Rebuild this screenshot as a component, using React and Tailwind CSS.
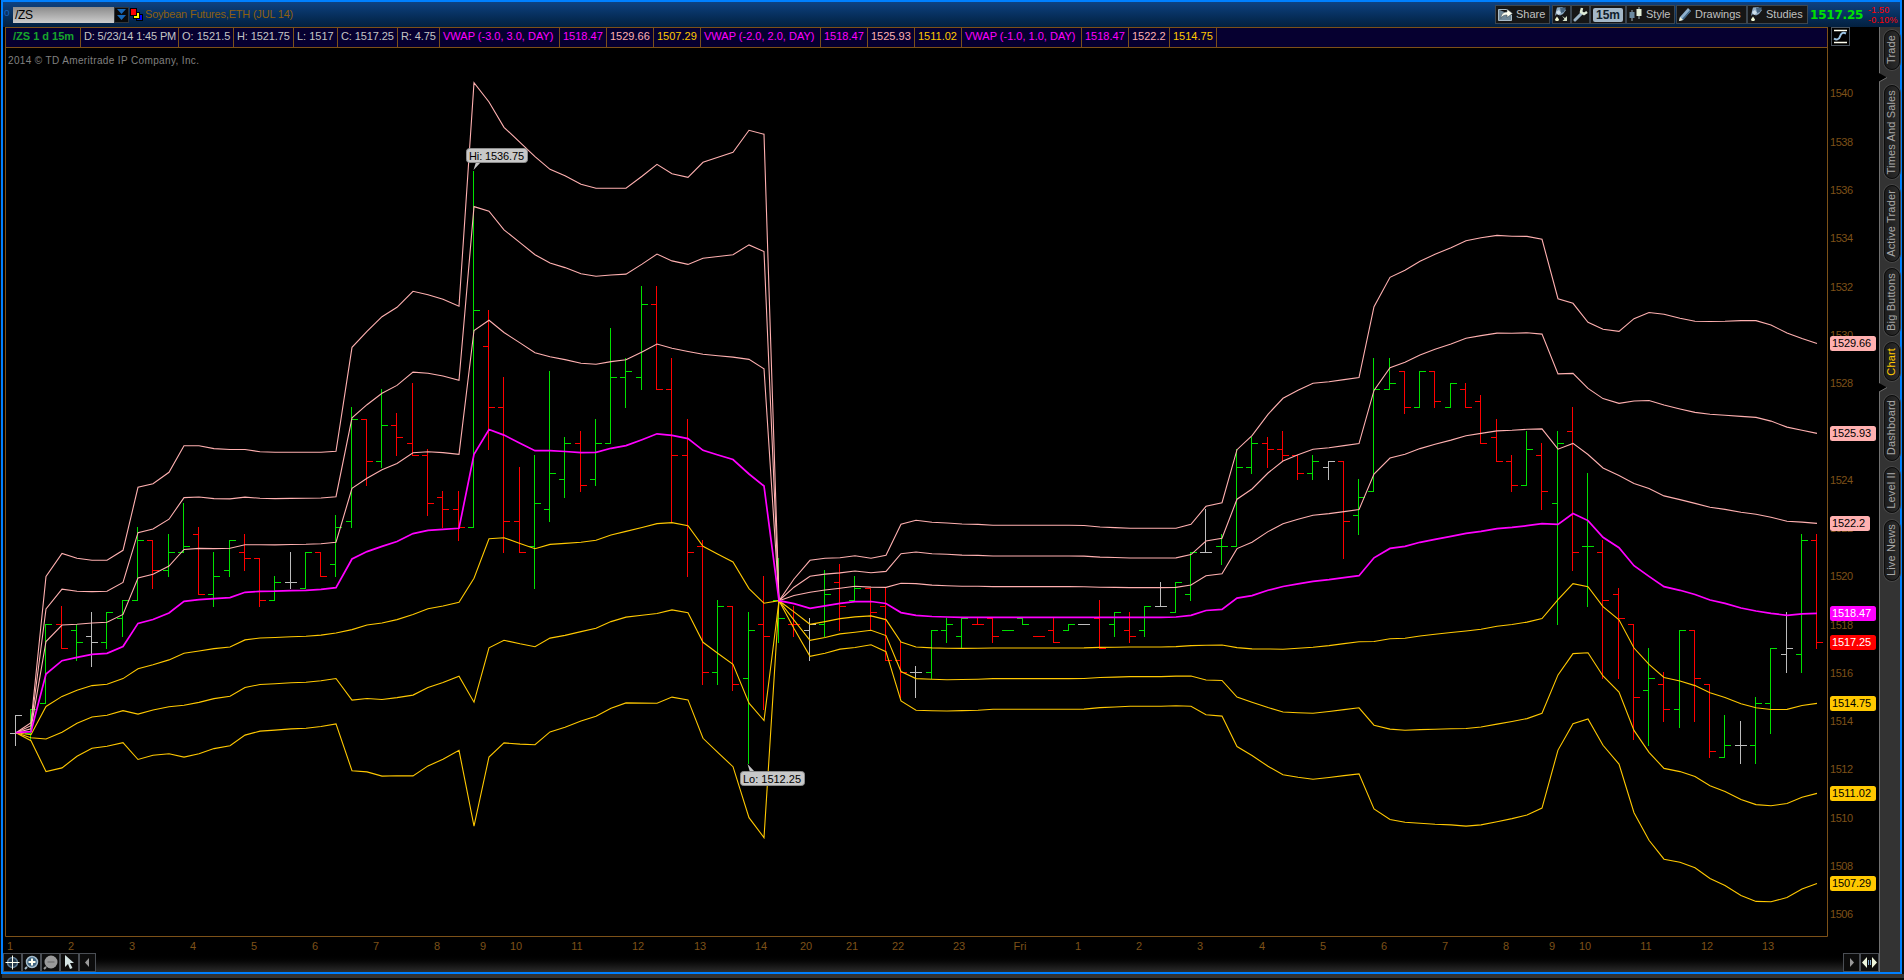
const PINK = '#ffb0b0';
const GOLD = '#ffc800';
const MAGENTA = '#ff00ff';

// Session high, every bar value below is counted in quarter-point ticks under it
const SESSION_HIGH = 1536.75;

// [color, high, low, open, close]
const BARS = [
    ['w', 90, 95, 93, 90], ['g', 89, 94, 93, 89], ['g', 75, 88, 88, 75], ['r', 72, 79, 75, 79],
    ['g', 75, 81, 76, 78], ['w', 73, 82, 77, 78], ['g', 73, 79, 78, 73], ['g', 71, 77, 74, 71],
    ['g', 59, 71, 71, 61], ['r', 61, 69, 61, 66], ['g', 60, 67, 66, 63], ['g', 55, 63, 63, 62],
    ['r', 59, 70, 60, 70], ['g', 63, 72, 70, 67], ['g', 61, 67, 66, 61], ['r', 60, 66, 63, 64],
    ['r', 64, 72, 64, 71], ['g', 67, 71, 71, 68], ['w', 63, 69, 68, 68], ['g', 63, 69, 69, 63],
    ['r', 63, 67, 63, 67], ['g', 57, 67, 65, 59], ['g', 39, 59, 58, 41], ['r', 41, 52, 41, 48],
    ['g', 36, 49, 48, 42], ['r', 40, 47, 42, 44], ['r', 35, 47, 45, 47], ['r', 46, 57, 47, 55],
    ['r', 53, 59, 54, 56], ['r', 53, 61, 56, 59], ['g', 0, 59, 59, 23], ['r', 23, 46, 29, 39],
    ['r', 34, 63, 39, 58], ['r', 49, 63, 58, 63], ['g', 47, 69, 62, 55], ['g', 33, 58, 56, 50],
    ['g', 44, 54, 51, 45], ['r', 43, 53, 45, 52], ['g', 41, 52, 51, 45], ['g', 26, 45, 45, 34],
    ['g', 31, 39, 34, 33], ['g', 19, 36, 34, 22], ['r', 19, 36, 22, 36], ['r', 31, 58, 36, 47],
    ['r', 41, 67, 47, 63], ['r', 61, 85, 62, 83], ['g', 71, 85, 83, 72], ['r', 72, 86, 72, 85],
    ['g', 73, 98, 84, 76], ['r', 67, 89, 75, 77], ['g', 64, 78, 71, 74], ['r', 72, 77, 75, 75],
    ['w', 74, 81, 76, 75], ['g', 66, 77, 75, 70], ['r', 65, 76, 68, 72], ['g', 67, 71, 71, 69],
    ['r', 69, 76, 69, 73], ['r', 69, 81, 72, 81], ['r', 78, 87, 81, 83], ['w', 82, 87, 83, 83],
    ['g', 76, 84, 83, 76], ['g', 74, 78, 76, 75], ['g', 74, 79, 77, 74], ['r', 74, 75, 75, 75],
    ['r', 74, 78, 74, 77], ['g', 76, 76, 76, 76], ['g', 74, 75, 74, 75], ['r', 77, 77, 77, 77],
    ['r', 74, 78, 76, 78], ['g', 75, 76, 76, 75], ['w', 75, 75, 75, 75], ['r', 71, 79, 74, 79],
    ['g', 73, 77, 75, 73], ['r', 73, 78, 76, 77], ['g', 72, 77, 76, 72], ['w', 68, 72, 72, 72],
    ['g', 68, 73, 73, 68], ['g', 63, 71, 70, 63], ['w', 56, 63, 63, 63], ['g', 60, 65, 62, 62],
    ['g', 46, 62, 62, 49], ['g', 44, 50, 49, 45], ['r', 44, 49, 45, 46], ['r', 43, 48, 46, 47],
    ['r', 47, 51, 47, 50], ['g', 47, 51, 50, 48], ['w', 48, 51, 49, 48], ['r', 48, 64, 48, 58],
    ['g', 51, 60, 57, 54], ['g', 31, 53, 53, 36], ['g', 31, 36, 36, 35], ['r', 33, 40, 33, 39],
    ['g', 33, 39, 39, 33], ['r', 33, 39, 33, 38], ['g', 35, 39, 39, 35], ['r', 35, 39, 36, 39],
    ['r', 37, 45, 38, 45], ['r', 41, 48, 44, 48], ['r', 47, 53, 48, 52], ['g', 43, 52, 52, 46],
    ['r', 45, 56, 47, 53], ['g', 43, 75, 55, 45], ['r', 39, 66, 43, 63], ['g', 50, 72, 62, 62],
    ['r', 61, 84, 63, 71], ['r', 69, 84, 70, 74], ['r', 75, 94, 75, 87], ['g', 79, 95, 86, 84],
    ['r', 83, 91, 85, 89], ['g', 76, 92, 89, 76], ['r', 76, 91, 76, 84], ['r', 85, 97, 85, 96],
    ['g', 90, 97, 97, 95], ['w', 91, 98, 95, 95], ['g', 87, 98, 95, 88], ['g', 79, 93, 88, 79],
    ['w', 73, 83, 80, 79], ['g', 60, 83, 80, 61], ['r', 60, 79, 61, 78],
];

// [vwap, upper 3-deviation band] for every bar, in chart pixels
const VWAP = [
    [732.7, 732.7], [731.7, 722.7], [674, 576.5], [660.7, 553.5], [657.3, 558.3], [654.3, 560.3],
    [653.3, 560.3], [646.5, 550.3], [623.4, 487.3], [619.5, 483.7], [613, 472.3], [601.4, 445.7],
    [599.7, 445.7], [598.6, 448.6], [597.6, 449.5], [592.3, 449.5], [591.4, 451.7], [591.2, 452.3],
    [590.6, 452.3], [590.3, 452.3], [589.4, 452.3], [587.6, 451.3], [559, 347.3], [551.6, 331.3],
    [546.4, 316.7], [541.5, 307.3], [533.6, 291.3], [530.3, 294.7], [529.3, 299.3], [528.3, 306.3],
    [454.4, 82.7], [429.5, 102], [435.1, 127.3], [443.2, 142.3], [450.7, 156.7], [450.6, 169.3],
    [451.5, 175.7], [452.7, 184.3], [452.3, 188.3], [448.3, 188.3], [445.6, 188.3], [439.7, 176.3],
    [433.8, 164.3], [435.4, 173.7], [438.6, 177.3], [450.3, 162.3], [455, 157.3], [459.5, 152.3],
    [474, 130.3], [486, 134.3], [600.7, 600.7], [603.7, 579], [608.3, 560.3], [605.8, 558.3],
    [603.4, 557.7], [601.6, 555.7], [601.5, 558.3], [603.5, 555.3], [612.6, 524.3], [615.3, 520.3],
    [616.5, 522.3], [617, 523], [617.3, 524], [617.3, 524.4], [617.3, 525.3], [617.3, 525.3],
    [617.3, 525.3], [617.3, 525.3], [617.3, 525.3], [617.3, 525.3], [617.3, 525.5], [617.3, 527],
    [617.3, 527.6], [617.3, 528.3], [617.3, 528.3], [617.3, 528.3], [617, 528.3], [615.3, 524.3],
    [610.5, 506.3], [609.4, 502.7], [598.1, 449.7], [595.6, 435.7], [590.3, 414.3], [586.5, 398.3],
    [583.8, 390.3], [581.3, 383.3], [579.6, 381.7], [577.6, 379.6], [575.7, 377.5], [557.8, 306.7],
    [548.4, 277.3], [546.3, 270.3], [542.3, 261.3], [539.3, 254.3], [536.3, 247.7], [533.4, 240.7],
    [531.3, 237.7], [528.6, 235.4], [527.4, 236.2], [525.7, 236.4], [523.7, 239.3], [524.4, 298.7],
    [513.5, 303.3], [520.6, 322.3], [537.3, 329.3], [547.7, 331.3], [565.7, 318.7], [576.4, 312.5],
    [586.7, 314.2], [590.3, 318.3], [594.5, 321.3], [600, 321.5], [603.4, 321.3], [608, 320.6],
    [611, 320.6], [613.4, 325], [615.3, 333], [613.8, 338.6], [613.4, 343.4],
];

const BAND_LINES = [
    { dev: 1, color: GOLD }, { dev: 2, color: GOLD }, { dev: 3, color: GOLD },
    { dev: -3, color: PINK }, { dev: -2, color: PINK }, { dev: -1, color: PINK },
];

const BAR_COLORS = { g: '#00e000', r: '#ff0000', w: '#bcbcbc' };

const INFO_CELLS = [
    { text: '/ZS 1 d 15m', className: 'w-[75px] pl-[7px] font-bold text-[#17a52c]' },
    { text: 'D: 5/23/14 1:45 PM', className: 'w-[98px] pl-[3px] tracking-[-0.15px] text-[#c4c4c4]' },
    { text: 'O: 1521.5', className: 'w-[55px] pl-[3px] text-[#c4c4c4]' },
    { text: 'H: 1521.75', className: 'w-[60px] pl-[3px] tracking-[-0.1px] text-[#c4c4c4]' },
    { text: 'L: 1517', className: 'w-[44px] pl-[3px] text-[#c4c4c4]' },
    { text: 'C: 1517.25', className: 'w-[60px] pl-[3px] tracking-[-0.1px] text-[#c4c4c4]' },
    { text: 'R: 4.75', className: 'w-[42px] pl-[3px] tracking-[-0.1px] text-[#c4c4c4]' },
    { text: 'VWAP (-3.0, 3.0, DAY)', className: 'w-[120px] pl-[3px] text-[#ff00ff]' },
    { text: '1518.47', className: 'w-[47px] pl-[3px] text-[#ff00ff]' },
    { text: '1529.66', className: 'w-[47px] pl-[3px] text-[#ffb0b0]' },
    { text: '1507.29', className: 'w-[47px] pl-[3px] text-[#ffc800]' },
    { text: 'VWAP (-2.0, 2.0, DAY)', className: 'w-[120px] pl-[3px] text-[#ff00ff]' },
    { text: '1518.47', className: 'w-[47px] pl-[3px] text-[#ff00ff]' },
    { text: '1525.93', className: 'w-[47px] pl-[3px] text-[#ffb0b0]' },
    { text: '1511.02', className: 'w-[47px] pl-[3px] text-[#ffc800]' },
    { text: 'VWAP (-1.0, 1.0, DAY)', className: 'w-[120px] pl-[3px] text-[#ff00ff]' },
    { text: '1518.47', className: 'w-[47px] pl-[3px] text-[#ff00ff]' },
    { text: '1522.2', className: 'w-[41px] pl-[3px] text-[#ffb0b0]' },
    { text: '1514.75', className: 'w-[47px] pl-[3px] text-[#ffc800]' },
];

const TIME_LABELS = [
    ['1', 10], ['2', 71], ['3', 132], ['4', 193], ['5', 254], ['6', 315], ['7', 376], ['8', 437],
    ['9', 483], ['10', 516], ['11', 577], ['12', 638], ['13', 700], ['14', 761], ['20', 806],
    ['21', 852], ['22', 898], ['23', 959], ['Fri', 1020], ['1', 1078], ['2', 1139], ['3', 1200],
    ['4', 1262], ['5', 1323], ['6', 1384], ['7', 1445], ['8', 1506], ['9', 1552], ['10', 1585],
    ['11', 1646], ['12', 1707], ['13', 1768],
];

const PRICE_TAGS = [
    { text: '1529.66', y: 343, fill: PINK, color: '#000' },
    { text: '1525.93', y: 433, fill: PINK, color: '#000' },
    { text: '1522.2', y: 523, fill: PINK, color: '#000', width: 40 },
    { text: '1518.47', y: 613, fill: MAGENTA, color: '#fff' },
    { text: '1517.25', y: 642, fill: '#ff0000', color: '#fff' },
    { text: '1514.75', y: 703, fill: GOLD, color: '#000' },
    { text: '1511.02', y: 793, fill: GOLD, color: '#000' },
    { text: '1507.29', y: 883, fill: GOLD, color: '#000' },
];

const SIDE_TABS = [
    { text: 'Trade', className: 'mt-[3px] h-10 text-[#a8a8a8]' },
    { text: 'Times And Sales', className: 'mt-[15px] h-[94px] text-[#a8a8a8]' },
    { text: 'Active Trader', className: 'mt-[6px] h-[77px] text-[#a8a8a8]' },
    { text: 'Big Buttons', className: 'mt-[6px] h-[68px] text-[#a8a8a8]' },
    { text: 'Chart', className: 'mt-[6px] h-[39px] text-[#ffc800]' },
    { text: 'Dashboard', className: 'mt-[14px] h-[66px] text-[#a8a8a8]' },
    { text: 'Level II', className: 'mt-[6px] h-[46px] text-[#a8a8a8]' },
    { text: 'Live News', className: 'mt-[7px] h-[61px] text-[#a8a8a8]' },
];

const barX = (i) => Math.round(14.9 + i * 15.264);
const tickY = (ticks) => Math.round(171.3 + ticks * 6.037);
const priceY = (price) => 171.8 + (SESSION_HIGH - price) * 4 * 6.037;

function bandPoints(dev) {
    return VWAP.map(([mid, top], i) => {
        const sd = (mid - top) / 3;
        return `${barX(i) + 1},${(mid + sd * dev).toFixed(1)}`;
    }).join(' ');
}

function PriceBar({ index, bar }) {
    const [color, high, low, open, close] = bar;
    const x = barX(index);
    return (
        <g fill={BAR_COLORS[color]} shapeRendering="crispEdges">
            {high !== low && <rect x={x} y={tickY(high)} width="1" height={tickY(low) - tickY(high) + 1} />}
            <rect x={x - 5} y={tickY(open)} width="6" height="1" />
            <rect x={x} y={tickY(close)} width="7" height="1" />
        </g>
    );
}

function Chart() {
    const prices = [];
    for (let p = 1540; p >= 1506; p -= 2) prices.push(p);

    return (
        <svg width="1876" height="905" viewBox="3 48 1876 905" className="block bg-black" fontFamily="Liberation Sans, Arial, sans-serif" fontSize="11">
            {/* plot frame */}
            <path d="M5.5 48V936.5H1827.5V48" fill="none" stroke="#7d5118" />
            <text x="8" y="64" fill="#808080" fontSize="10" textLength="191">2014 © TD Ameritrade IP Company, Inc.</text>

            {BARS.map((bar, i) => (
                <PriceBar key={i} index={i} bar={bar} />
            ))}
            {BAND_LINES.map(({ dev, color }) => (
                <polyline key={dev} points={bandPoints(dev)} fill="none" stroke={color} strokeWidth="1.1" />
            ))}
            <polyline points={bandPoints(0)} fill="none" stroke={MAGENTA} strokeWidth="1.7" />

            {/* high / low callouts */}
            <path d="M473.5 170L476 162H481Z" fill="#c8c8c8" />
            <rect x="466.5" y="148.5" width="61" height="14" rx="3" fill="#c8c8c8" stroke="#8c8c8c" />
            <text x="469" y="160" fill="#000" textLength="55">Hi: 1536.75</text>
            <path d="M747.5 764L750 772H755Z" fill="#c8c8c8" />
            <rect x="740.5" y="771.5" width="64" height="14" rx="3" fill="#c8c8c8" stroke="#8c8c8c" />
            <text x="743" y="783" fill="#000" textLength="58">Lo: 1512.25</text>

            {/* price axis */}
            {prices.map((p) => (
                <text key={p} x="1830" y={Math.round(priceY(p)) + 4} fill="#7d5118" textLength="23">{p}</text>
            ))}
            {PRICE_TAGS.map((tag) => (
                <g key={tag.text}>
                    <rect x="1830" y={tag.y - 7} width={tag.width || 46} height="15" rx="2.5" fill={tag.fill} />
                    <text x="1832" y={tag.y + 4} fill={tag.color} textLength={tag.width ? 33 : 39}>{tag.text}</text>
                </g>
            ))}

            {/* time axis */}
            {TIME_LABELS.map(([text, x]) => (
                <text key={x} x={x} y="950" fill="#7d5118" textAnchor="middle">{text}</text>
            ))}
        </svg>
    );
}

function ToolButton({ children, className }) {
    return (
        <div className={`flex h-[19px] shrink-0 items-center border border-[#3c4650] bg-[#161616] text-[11px] text-[#c0c0c0] ${className}`}>
            {children}
        </div>
    );
}

function BrushIcon({ arrow }) {
    return (
        <svg width="15" height="16" viewBox="0 0 15 16" className="shrink-0">
            <path d="M3 0.5L8 0L12 3L9 7L6 8.500L3 7L1 9L2 4Z" fill="#8fabc2" />
            <path d="M6 0.500H12L10 5L7 6Z" fill="#45637e" />
            <path d="M2 5L5 3L7 6L4 8Z" fill="#cfe0ea" />
            <path d="M3 9.500L5 12.500C5 14.500 1 14.500 1 12.500Z" fill="#eef6d4" />
            {arrow && <path d="M8 9L11 11L13 9V14H8.500L10.500 12Z" fill="#d8e4cc" />}
        </svg>
    );
}

function Header() {
    return (
        <div className="flex h-[25px] items-center bg-gradient-to-b from-[#0e4282] to-[#03203f]">
            <span className="ml-px mt-[-4px] w-[9px] text-[10px] leading-none text-[#1565c0]">o</span>
            <div className="flex h-4 w-[101px] items-center bg-gradient-to-b from-[#8c8c8c] to-[#cdcdcd] pl-0.5 text-[12px] tracking-[-0.3px] text-black">/ZS</div>
            <div className="flex h-4 w-[15px] items-center justify-center border border-[#30363c] bg-[#0a0a0a]">
                <svg width="9" height="12" viewBox="0 0 9 12" fill="#1667b8">
                    <path d="M0 0H9L4.500 5Z M0 6H9L4.500 11Z" />
                </svg>
            </div>
            <svg width="13" height="13" viewBox="0 0 13 13" className="ml-px" shapeRendering="crispEdges">
                <rect x="6" y="6" width="6" height="6" fill="#0000ff" stroke="#000" />
                <rect x="3" y="4" width="6" height="6" fill="#ffff00" stroke="#000" />
                <rect x="0" y="0" width="6" height="7" fill="#ff0000" stroke="#000" />
            </svg>
            <span className="ml-[2px] text-[11px] tracking-[-0.2px] text-[#8c6010]">Soybean Futures,ETH (JUL 14)</span>

            <div className="ml-auto flex items-center">
                <ToolButton className="w-[55px] gap-[3px] pl-0.5">
                    <svg width="15" height="13" viewBox="0 0 15 13" className="shrink-0">
                        <path d="M0.500 1.500H9M13.500 7V12.500H0.500V1.500" fill="#6f8898" stroke="#a9bcc8" />
                        <path d="M3 10.500C3 6 5.500 4 9 4V1L14.500 5.500L9 9.500V7C6 7 4 8 3 10.500Z" fill="#fffff0" stroke="#40505c" strokeWidth=".6" />
                    </svg>
                    Share
                </ToolButton>
                <ToolButton className="ml-0.5 w-[19px] justify-center">
                    <BrushIcon arrow />
                </ToolButton>
                <ToolButton className="w-[19px] justify-center">
                    <svg width="15" height="15" viewBox="0 0 15 15">
                        <path d="M2 13L9 6" stroke="#9db4c6" strokeWidth="3" strokeLinecap="round" />
                        <path d="M9 1L8 5L11 7L14 5" stroke="#e0ecd8" strokeWidth="2.500" fill="none" />
                    </svg>
                </ToolButton>
                <ToolButton className="w-[36px] justify-center">
                    <span className="flex h-[14px] w-[30px] items-center justify-center rounded-[2px] bg-[#a4b8c8] text-[12px] font-bold text-[#10202c]">15m</span>
                </ToolButton>
                <ToolButton className="w-[49px] gap-1 pl-0.5">
                    <svg width="13" height="15" viewBox="0 0 13 15" className="shrink-0">
                        <path d="M3 3V14M10 0V12" stroke="#9fb2bc" />
                        <rect x="0.500" y="5" width="5" height="6" fill="#6b8aa0" />
                        <rect x="7.500" y="2" width="5" height="7" fill="#e3efd8" />
                    </svg>
                    Style
                </ToolButton>
                <ToolButton className="ml-px w-[71px] gap-[3px] pl-px">
                    <svg width="14" height="14" viewBox="0 0 14 14" className="shrink-0">
                        <path d="M1 13L2 9L10 0L13 3L5 12Z" fill="#8fb0cc" />
                        <path d="M4 11L12 2L13 3L5 12Z" fill="#3d6484" />
                        <path d="M1 13L2 9L5 12Z" fill="#f4f4d8" />
                    </svg>
                    Drawings
                </ToolButton>
                <ToolButton className="w-[61px] gap-px pl-0.5">
                    <BrushIcon />
                    Studies
                </ToolButton>
                <span className="ml-0.5 w-[54px] font-['DejaVu_Sans'] text-[12px] font-bold tracking-[-0.2px] text-[#00e000]">1517.25</span>
                <div className="ml-1 w-[32px] text-[9px] leading-[10px] tracking-[0.2px] text-[#ff0000]">
                    <div>-1.50</div>
                    <div>-0.10%</div>
                </div>
            </div>
        </div>
    );
}

function InfoBar() {
    return (
        <div className="flex h-[21px]">
            <div className="ml-0.5 flex w-[1823px] border border-[#7d5118] bg-[#060030] text-[11px]">
                {INFO_CELLS.map((cell, i) => (
                    <div key={i} className={`flex shrink-0 items-center whitespace-nowrap border-r border-[#7d5118] pb-0.5 ${cell.className}`}>
                        {cell.text}
                    </div>
                ))}
            </div>
            <svg width="19" height="19" viewBox="0 0 19 19" className="ml-[3px]">
                <rect x="0.500" y="0.500" width="18" height="18" fill="#000" stroke="#4a545e" />
                <path d="M3 3.500H16M3 15.500H16" stroke="#fffff0" strokeWidth="1.400" />
                <path d="M3 11.500C5 13 8 13 9 9.500C10 6 12 5 15 6.500" fill="none" stroke="#9cc4e4" strokeWidth="2" />
            </svg>
        </div>
    );
}

function Sidebar() {
    return (
        <div className="relative flex w-[21px] flex-col items-center border-l border-[#707070] bg-[#333] pl-[3px]">
            {SIDE_TABS.map((tab) => (
                <div key={tab.text} className={`flex w-4 shrink-0 items-center justify-center rounded-full border border-[#0c0c0c] bg-gradient-to-r from-[#1c1c1c] to-[#2c2c2c] shadow-[0_0_0_1px_#484848] ${tab.className}`}>
                    <span className="rotate-180 whitespace-nowrap text-[11px] leading-none tracking-[0.15px] [writing-mode:vertical-rl]">{tab.text}</span>
                </div>
            ))}
            {/* group separators */}
            <svg width="9" height="320" viewBox="0 0 9 320" className="absolute left-[-1px] top-[46px]">
                <path d="M0 0L8 4.500L0 9Z M0 310L8 314.500L0 319Z" fill="#000" />
                <path d="M0 9L8 4.500M0 319L8 314.500" stroke="#707070" />
            </svg>
        </div>
    );
}

function BottomButton({ children, className = 'w-[19px]' }) {
    return <div className={`flex h-[19px] items-center justify-center border border-[#4a4e54] bg-[#0c0c0c] ${className}`}>{children}</div>;
}

function BottomBar() {
    return (
        <div className="flex h-[19px] bg-gradient-to-b from-black to-[#2c2c2c]">
            <BottomButton>
                <svg width="15" height="15" viewBox="0 0 15 15">
                    <circle cx="7.500" cy="7.500" r="5" fill="#25394a" stroke="#607c94" strokeWidth="1.500" />
                    <path d="M7.500 0.500V14.500M0.500 7.500H14.500" stroke="#fffff0" />
                </svg>
            </BottomButton>
            <BottomButton>
                <svg width="15" height="15" viewBox="0 0 15 15">
                    <circle cx="8" cy="7" r="5.500" fill="#3f6480" stroke="#a4bccc" strokeWidth="1.500" />
                    <path d="M1 14L3 12" stroke="#a4bccc" strokeWidth="2" />
                    <path d="M8 3.500V10.500M4.500 7H11.500" stroke="#fffff0" strokeWidth="2" />
                </svg>
            </BottomButton>
            <BottomButton>
                <svg width="15" height="15" viewBox="0 0 15 15">
                    <circle cx="8" cy="7" r="6.500" fill="#9a9a9a" />
                    <path d="M1 14L3 12" stroke="#9a9a9a" strokeWidth="2" />
                    <path d="M4.500 7H11.500" stroke="#808080" strokeWidth="2" />
                </svg>
            </BottomButton>
            <BottomButton>
                <svg width="11" height="15" viewBox="0 0 11 15">
                    <path d="M1 0L10 8H6L8.500 13L6 14L4 9L1 12Z" fill="#d4e4e4" />
                </svg>
            </BottomButton>
            <BottomButton className="w-[17px]">
                <svg width="5" height="9" viewBox="0 0 5 9" fill="#9a9a9a"><path d="M4 0V9L0 4.500Z" /></svg>
            </BottomButton>
            <BottomButton className="ml-auto w-[17px]">
                <svg width="5" height="9" viewBox="0 0 5 9" fill="#9a9a9a"><path d="M1 0V9L5 4.500Z" /></svg>
            </BottomButton>
            <BottomButton>
                <svg width="15" height="11" viewBox="0 0 15 11">
                    <path d="M5 0V11L0 5.500Z M10 0V11L15 5.500Z" fill="#eef6dc" />
                    <path d="M6.500 3V8M8.500 3V8" stroke="#7fa8cc" />
                </svg>
            </BottomButton>
        </div>
    );
}

export default function App() {
    return (
        <div className="h-[980px] w-[1904px] overflow-hidden bg-[#0a0a0a] font-['Liberation_Sans',Arial,sans-serif]">
            <div className="ml-px h-[974px] w-[1901px] border-2 border-[#0080ff] bg-black">
                <Header />
                <div className="flex h-[945px]">
                    <div className="flex w-[1876px] flex-col">
                        <InfoBar />
                        <Chart />
                        <BottomBar />
                    </div>
                    <Sidebar />
                </div>
            </div>
            <div className="ml-0.5 h-1 bg-[#333]" />
        </div>
    );
}
